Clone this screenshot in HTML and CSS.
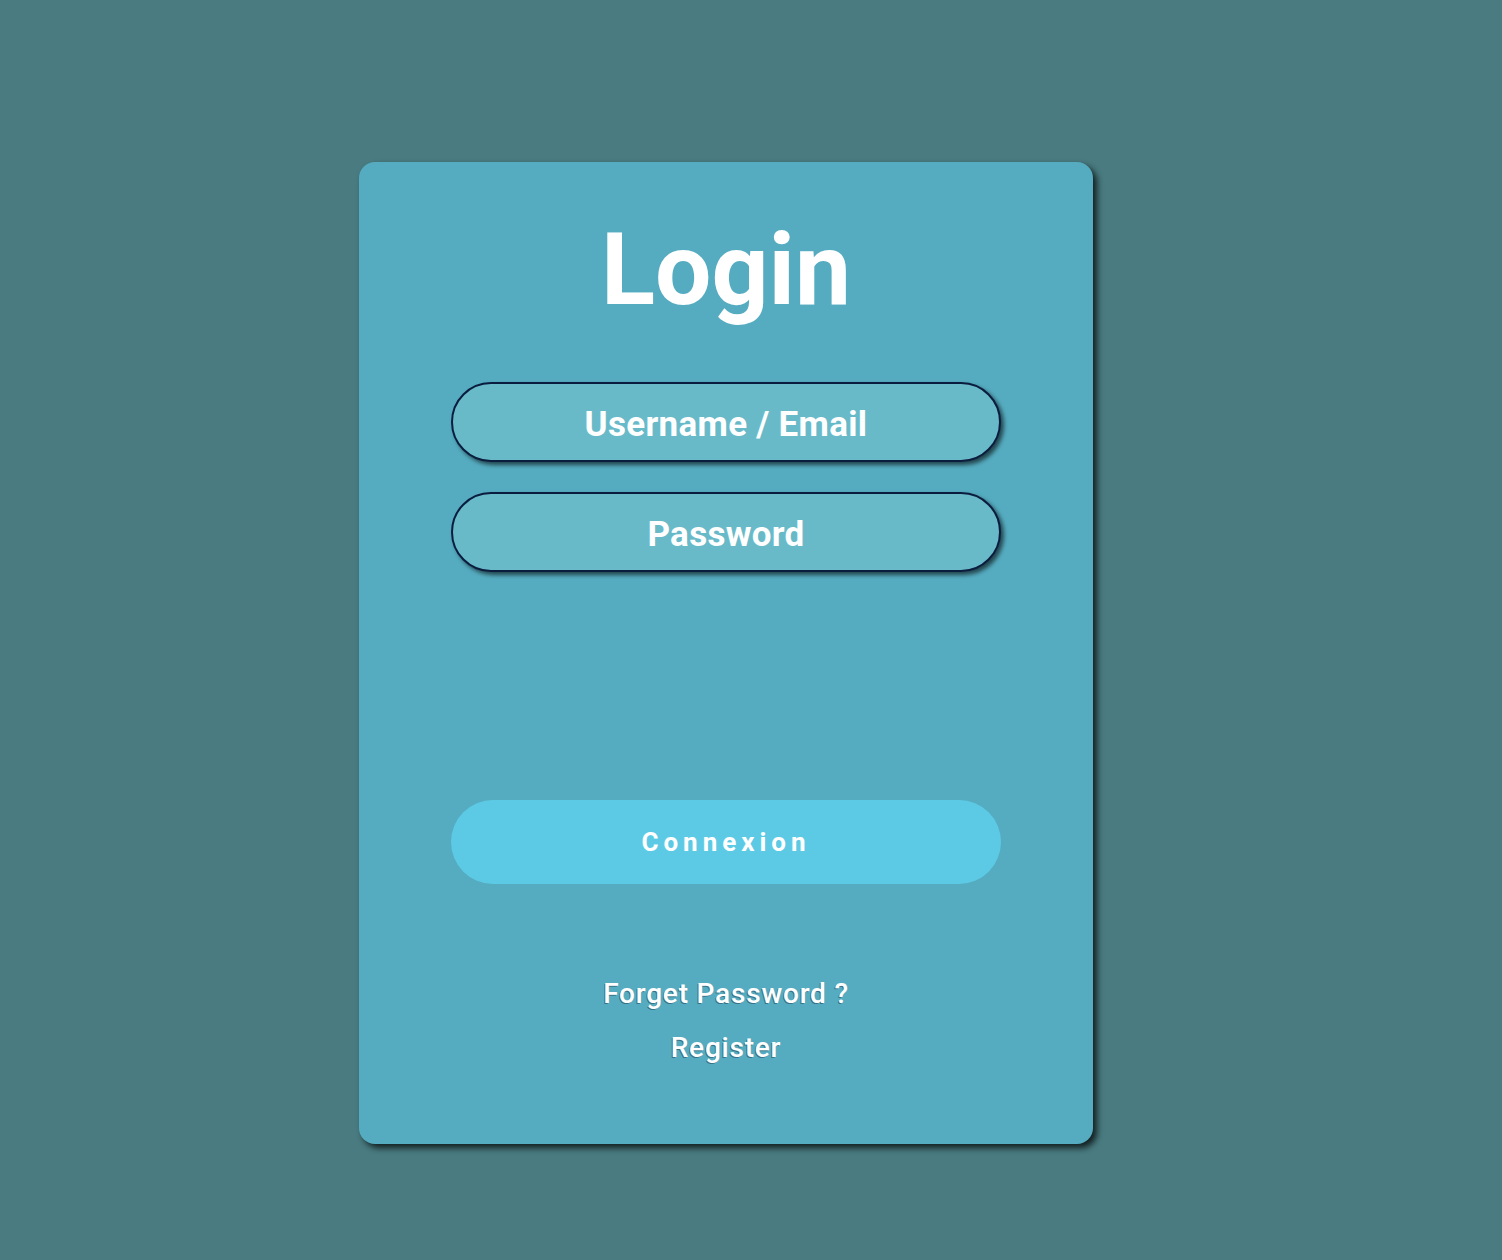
FILE: index.html
```html
<!DOCTYPE html>
<html lang="fr">
<head>
  <meta charset="UTF-8">
  <meta name="viewport" content="width=device-width, initial-scale=1.0">
  <title>Login</title>
  <link rel="stylesheet" href="styles.css">
</head>
<body>
  <div class="page">
    <div class="login-card">
      <h1 class="login-title">Login</h1>

      <form class="login-form">
        <input type="text" class="login-input" placeholder="Username / Email">
        <input type="password" class="login-input" placeholder="Password">
        <button type="button" class="login-button">Connexion</button>
      </form>

      <div class="login-links">
        <a href="#">Forget Password ?</a>
        <a href="#">Register</a>
      </div>
    </div>
  </div>
</body>
</html>
```

FILE: styles.css
```css
/* Colors */
:root {
  --page-bg: #497b80;
  --card-bg: #55acc0;
  --input-bg: #69bac9;
  --input-border: #0b1d3f;
  --button-bg: #5dcae5;
  --text-color: #ffffff;
}

/* Base */
body {
  margin: 0;
  background-color: var(--page-bg);
  font-family: Roboto, "Liberation Sans", sans-serif;
  color: var(--text-color);
}

.page {
  display: flex;
  justify-content: center;
  padding: 162px 50px 116px 0;
}

/* Card */
.login-card {
  box-sizing: border-box;
  width: 734px;
  height: 982px;
  padding-top: 58px;
  background-color: var(--card-bg);
  border-radius: 16px;
  box-shadow: 4px 4px 6px rgba(0, 0, 0, 0.75);
  display: flex;
  flex-direction: column;
  align-items: center;
}

.login-title {
  margin: 0;
  font-size: 100px;
  line-height: 1;
  font-weight: 700;
}

/* Form */
.login-form {
  margin-top: 62px;
  width: 550px;
  display: flex;
  flex-direction: column;
  gap: 30px;
}

.login-input {
  box-sizing: border-box;
  width: 100%;
  height: 80px;
  padding: 4px 0 0;
  border: 2px solid var(--input-border);
  border-radius: 40px;
  background-color: var(--input-bg);
  box-shadow: 3px 3px 4px rgba(0, 0, 0, 0.6);
  font-family: inherit;
  font-size: 35px;
  font-weight: 700;
  letter-spacing: 0.3px;
  color: var(--text-color);
  text-align: center;
  outline: none;
}

.login-input::placeholder {
  color: var(--text-color);
  opacity: 1;
}

.login-button {
  margin-top: 198px;
  height: 84px;
  border: none;
  border-radius: 42px;
  background-color: var(--button-bg);
  font-family: inherit;
  font-size: 26px;
  font-weight: 700;
  letter-spacing: 5px;
  color: var(--text-color);
  cursor: pointer;
}

/* Links */
.login-links {
  margin-top: 83px;
  display: flex;
  flex-direction: column;
  align-items: center;
}

.login-links a {
  font-size: 28px;
  line-height: 54px;
  font-weight: 500;
  letter-spacing: 0.8px;
  color: var(--text-color);
  text-decoration: none;
  text-shadow: -1px 1px 0 rgba(20, 40, 60, 0.45);
}
```
